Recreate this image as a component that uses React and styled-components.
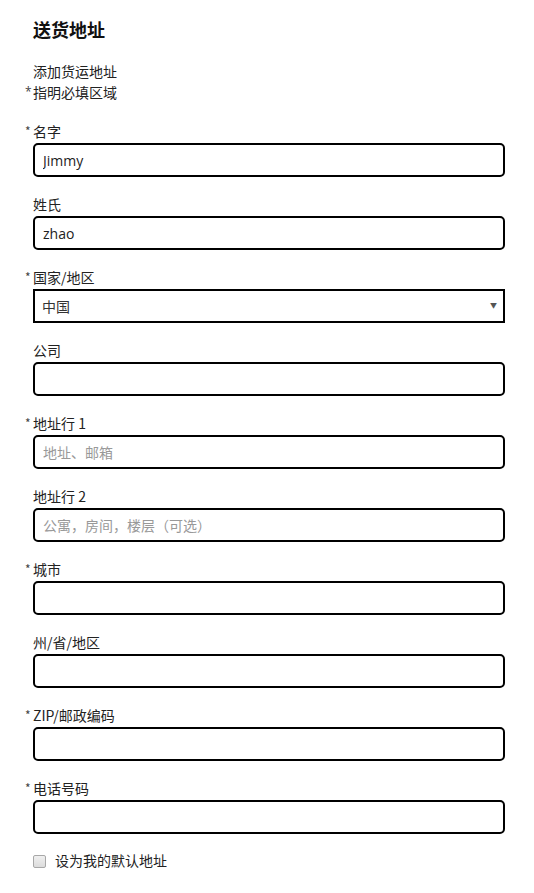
import styled, { createGlobalStyle } from "styled-components";

const GlobalStyle = createGlobalStyle`
  body {
    margin: 0;
    background: #fff;
    font-family: "Open Sans", "Noto Sans CJK SC", sans-serif;
    color: #222;
  }
`;

const fields = [
  { label: "名字", required: true, value: "Jimmy" },
  { label: "姓氏", value: "zhao" },
  { label: "国家/地区", required: true, select: true, value: "中国" },
  { label: "公司" },
  { label: "地址行 1", required: true, placeholder: "地址、邮箱" },
  { label: "地址行 2", placeholder: "公寓，房间，楼层（可选）" },
  { label: "城市", required: true },
  { label: "州/省/地区" },
  { label: "ZIP/邮政编码", required: true },
  { label: "电话号码", required: true },
];

const App = () => {
  return (
    <>
      <GlobalStyle />
      <Wrapper>
        <Title>送货地址</Title>
        <Intro>添加货运地址</Intro>
        <Note>
          <Star>*</Star>指明必填区域
        </Note>
        <Form>
          {fields.map((field) => (
            <Field key={field.label}>
              <Label $required={field.required}>
                {field.required && <Star>*</Star>}
                {field.label}
              </Label>
              {field.select ? (
                <SelectBox>
                  <Select defaultValue={field.value}>
                    <option>{field.value}</option>
                  </Select>
                  <Arrow>▼</Arrow>
                </SelectBox>
              ) : (
                <Input
                  type="text"
                  defaultValue={field.value}
                  placeholder={field.placeholder}
                />
              )}
            </Field>
          ))}
        </Form>
        <CheckRow>
          <Check type="checkbox" />
          <span>设为我的默认地址</span>
        </CheckRow>
      </Wrapper>
    </>
  );
};

export default App;

const Wrapper = styled.div`
  width: 472px;
  padding: 17px 0 0 33px;
`;

const Title = styled.h2`
  margin: 0;
  font-family: "Noto Sans CJK SC", sans-serif;
  font-size: 18px;
  font-weight: 700;
  line-height: 24px;
  color: #111;
`;

const Intro = styled.div`
  margin-top: 20px;
  font-size: 14px;
  line-height: 21px;
`;

const Note = styled.div`
  display: flex;
  align-items: flex-start;
  height: 21px;
  margin-left: -8px;
  font-size: 14px;
  line-height: 21px;
`;

const Star = styled.span`
  width: 8px;
  flex-shrink: 0;
  font-size: 12px;
  line-height: 20px;
  color: #444;
`;

const Form = styled.div`
  margin-top: 18px;
  display: flex;
  flex-direction: column;
  gap: 17px;
`;

const Field = styled.div`
  display: flex;
  flex-direction: column;
  gap: 2px;
`;

const Label = styled.label`
  display: flex;
  align-items: flex-start;
  height: 20px;
  font-family: "Noto Sans CJK SC", sans-serif;
  font-size: 14px;
  line-height: 20px;
  margin-left: ${(p) => (p.$required ? "-8px" : "0")};
  white-space: pre;
  color: #222;
`;

const Input = styled.input`
  box-sizing: border-box;
  width: 472px;
  height: 34px;
  border: 2px solid #000;
  border-radius: 5px;
  padding: 0 8px;
  font-family: "Open Sans", "Noto Sans CJK SC", sans-serif;
  font-size: 14px;
  color: #222;
  outline: none;

  &::placeholder {
    color: #999;
  }
`;

const SelectBox = styled.div`
  position: relative;
  width: 472px;
`;

const Select = styled.select`
  box-sizing: border-box;
  width: 100%;
  height: 34px;
  border: 2px solid #000;
  border-radius: 0;
  padding: 0 7px;
  appearance: none;
  background: #fff;
  font-family: "Open Sans", "Noto Sans CJK SC", sans-serif;
  font-size: 14px;
  color: #333;
  outline: none;
`;

const Arrow = styled.span`
  position: absolute;
  right: 8px;
  top: 13px;
  font-size: 7px;
  line-height: 7px;
  color: #555;
  pointer-events: none;
`;

const CheckRow = styled.label`
  display: flex;
  align-items: center;
  gap: 9px;
  margin-top: 17px;
  font-size: 14px;
  line-height: 20px;
`;

const Check = styled.input`
  appearance: none;
  box-sizing: border-box;
  margin: 0;
  width: 13px;
  height: 13px;
  border: 1px solid #a8a8a8;
  border-radius: 2px;
  background: linear-gradient(#f0f0f0, #dcdcdc);
`;
